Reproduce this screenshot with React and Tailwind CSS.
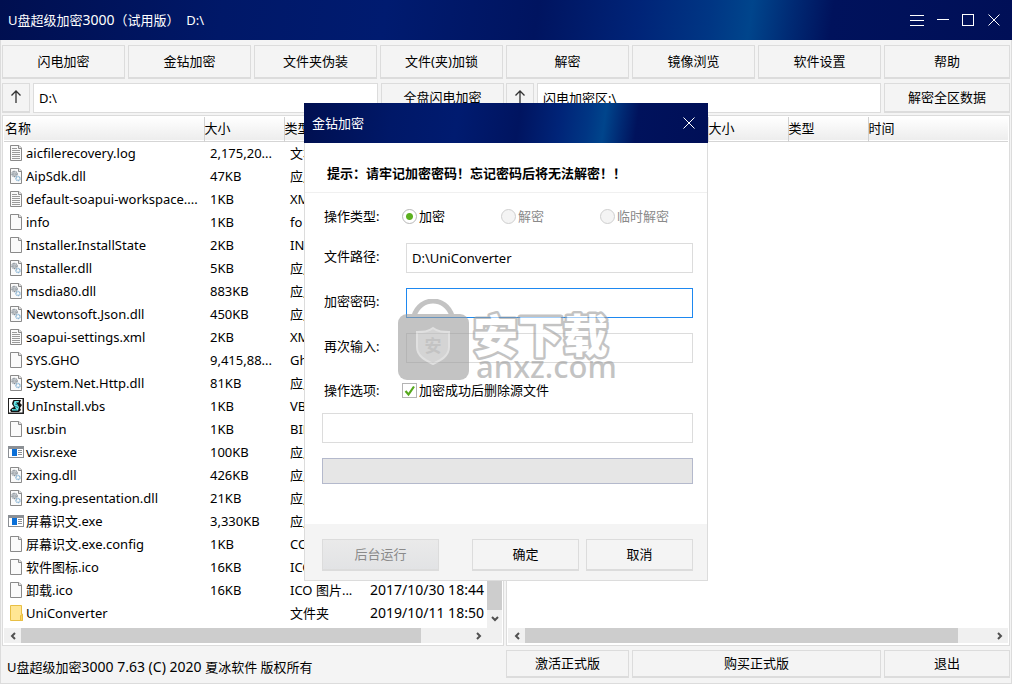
import { useState } from 'react';

const toolbar = ['闪电加密', '金钻加密', '文件夹伪装', '文件(夹)加锁', '解密', '镜像浏览', '软件设置', '帮助'];

const files = [
    { icon: 'text', name: 'aicfilerecovery.log', size: '2,175,20...', type: '文本文档' },
    { icon: 'dll', name: 'AipSdk.dll', size: '47KB', type: '应用程...' },
    { icon: 'text', name: 'default-soapui-workspace....', size: '1KB', type: 'XML 文档' },
    { icon: 'blank', name: 'info', size: '1KB', type: 'fo' },
    { icon: 'blank', name: 'Installer.InstallState', size: '2KB', type: 'INSTALL...' },
    { icon: 'dll', name: 'Installer.dll', size: '5KB', type: '应用程...' },
    { icon: 'dll', name: 'msdia80.dll', size: '883KB', type: '应用程...' },
    { icon: 'dll', name: 'Newtonsoft.Json.dll', size: '450KB', type: '应用程...' },
    { icon: 'text', name: 'soapui-settings.xml', size: '2KB', type: 'XML 文档' },
    { icon: 'blank', name: 'SYS.GHO', size: '9,415,88...', type: 'Gho' },
    { icon: 'dll', name: 'System.Net.Http.dll', size: '81KB', type: '应用程...' },
    { icon: 'vbs', name: 'UnInstall.vbs', size: '1KB', type: 'VBS' },
    { icon: 'blank', name: 'usr.bin', size: '1KB', type: 'BIN 文件' },
    { icon: 'exe', name: 'vxisr.exe', size: '100KB', type: '应用程序' },
    { icon: 'dll', name: 'zxing.dll', size: '426KB', type: '应用程...' },
    { icon: 'dll', name: 'zxing.presentation.dll', size: '21KB', type: '应用程...' },
    { icon: 'exe', name: '屏幕识文.exe', size: '3,330KB', type: '应用程序' },
    { icon: 'blank', name: '屏幕识文.exe.config', size: '1KB', type: 'CONFIG' },
    { icon: 'blank', name: '软件图标.ico', size: '16KB', type: 'ICO 图片...' },
    { icon: 'blank', name: '卸载.ico', size: '16KB', type: 'ICO 图片...', time: '2017/10/30 18:44' },
    { icon: 'folder', name: 'UniConverter', size: '', type: '文件夹', time: '2019/10/11 18:50' },
];

// shared by the window and the dialog title bars
const titleBg = 'bg-[linear-gradient(98deg,#000f50_0%,#001868_22%,#001b70_38%,#001460_53%,#002478_63%,#003684_70%,#00458c_74%,#002a74_78%,#00125c_82%,#000f57_100%)]';

function FileIcon({ kind }) {
    if (kind === 'exe') {
        return (
            <svg width="16" height="16" viewBox="0 0 16 16" shapeRendering="crispEdges" className="shrink-0">
                <path d="M0 2h16v12H0z" fill="#8b8f94" />
                <path d="M1 5h14v8H1z" fill="#fff" />
                <path d="M4 5h5v7H4z" fill="#0a6fd8" />
                <path d="M10 6h4v1h-4zM10 8h4v1h-4zM10 10h4v1h-4z" fill="#8b8f94" />
            </svg>
        );
    }
    if (kind === 'vbs') {
        return (
            <svg width="16" height="16" viewBox="0 0 16 16" className="shrink-0">
                <path d="M0 0h16v16H0z" fill="#222" />
                <path d="M1 1h13.500v13.500H1z" fill="#fff" />
                <path d="M4.500 4l1-2H13l-1 3 2 2-2 3 1 2-2 2H3l-1-2 2-2 2-1-2-3z" fill="#111" />
                <path d="M6.500 3H11l-.5 1.500H8L11 9l-1 3.500H4V11h4L5.500 6z" fill="#6fe6e8" />
                <path d="M7 6l3 1M7 8.500l3 1M5 12h4" stroke="#0d8d94" />
            </svg>
        );
    }
    if (kind === 'folder') {
        return (
            <svg width="16" height="16" viewBox="0 0 16 16" className="shrink-0">
                <path d="M2.500 .5h11v8.500h1v6.500h-12z" fill="#ffe694" stroke="#e8bf45" />
                <path d="M12.500 15.500v-5l2-1v6z" fill="#ffd65c" stroke="#e8bf45" />
            </svg>
        );
    }
    return (
        <svg width="16" height="16" viewBox="0 0 16 16" className="shrink-0">
            <path d="M2.500 .5h8.500l2.500 2.500v12.500h-11z" fill="#fafafa" stroke="#8a8a8a" />
            <path d="M10.500 .5v3h3" fill="#e4e4e4" stroke="#8a8a8a" />
            {kind === 'text' && <path d="M4 3.500h5M4 5.500h8M4 7.500h8M4 9.500h8M4 11.500h8M4 13.500h8" stroke="#9a9a9a" />}
            {kind === 'dll' && (
                <g fill="none">
                    <circle cx="6.500" cy="6" r="2.500" stroke="#868f97" strokeWidth="1.500" strokeDasharray="1.200 .4" />
                    <circle cx="6.500" cy="6" r="1" stroke="#8d969e" />
                    <circle cx="10" cy="10.500" r="2" stroke="#8db6d4" strokeWidth="1.500" strokeDasharray="1.200 .4" />
                </g>
            )}
        </svg>
    );
}

function Arrow({ className }) {
    return (
        <svg width="8" height="8" viewBox="0 0 8 8" className={className}>
            <path d="M2 1l3 3-3 3" fill="none" stroke="#505050" strokeWidth="2" />
        </svg>
    );
}

function CloseIcon() {
    return (
        <svg width="14" height="14" viewBox="0 0 14 14" stroke="#fff">
            <path d="M1.500 1.500l11 11M12.500 1.500l-11 11" />
        </svg>
    );
}

function HScroll({ thumb }) {
    return (
        <div className="flex h-[15px] shrink-0 bg-[#f0f0f0]">
            <button aria-label="向左" className="flex w-[17px] items-center justify-center"><Arrow className="rotate-180" /></button>
            <div className="flex-1"><div className={`h-full bg-[#cdcdcd] ${thumb}`} /></div>
            <button aria-label="向右" className="flex w-[17px] items-center justify-center"><Arrow /></button>
        </div>
    );
}

function Btn({ className = '', children, ...rest }) {
    return (
        <button className={`border border-[#dcdcdc] border-b-2 bg-[#f4f4f4] pb-px text-center ${className}`} {...rest}>
            {children}
        </button>
    );
}

function FileTable({ rows }) {
    return (
        <table className="w-full table-fixed border-collapse text-left">
            <colgroup>
                <col className="w-[200px]" />
                <col className="w-[80px]" />
                <col className="w-[80px]" />
                <col />
            </colgroup>
            <thead>
                <tr className="h-6 border-b border-[#d5d5d5] bg-linear-to-b from-white to-[#ededed]">
                    <th className="pb-[2px] pl-px font-normal">名称</th>
                    <th className="border-l border-[#d0d0d0] pb-[2px] font-normal">大小</th>
                    <th className="border-l border-[#d0d0d0] pb-[2px] font-normal">类型</th>
                    <th className="border-l border-[#d0d0d0] pb-[2px] font-normal">时间</th>
                </tr>
            </thead>
            <tbody>
                {rows.map((f) => (
                    <tr key={f.name} className="h-[23px]">
                        <td className="pl-1">
                            <div className="flex items-center gap-[2px] whitespace-nowrap">
                                <FileIcon kind={f.icon} />
                                {f.name}
                            </div>
                        </td>
                        <td className="truncate pl-[6px]">{f.size}</td>
                        <td className="truncate pl-[6px]">{f.type}</td>
                        <td className="whitespace-nowrap pl-[6px] text-[14px]">{f.time}</td>
                    </tr>
                ))}
            </tbody>
        </table>
    );
}

function PathBar({ id, value, action, actionWidth }) {
    return (
        <div className="flex h-[30px] min-w-0 gap-[3px]">
            <Btn className="flex w-7 items-center justify-center" aria-label="上一级">
                <svg width="12" height="14" viewBox="0 0 12 14" fill="none" stroke="#333" strokeWidth="1.300">
                    <path d="M6 13V1M1.500 5.500L6 1l4.500 4.500" />
                </svg>
            </Btn>
            <input
                id={id}
                aria-label="路径"
                defaultValue={value}
                className="min-w-0 flex-1 border border-[#dcdcdc] bg-white px-[5px] outline-none"
            />
            <Btn className={actionWidth}>{action}</Btn>
        </div>
    );
}

function Watermark() {
    return (
        <svg width="230" height="90" viewBox="0 0 230 90" className="pointer-events-none absolute top-[196px] left-[93px]">
            <g opacity=".6">
                <path d="M17 17C23-3 49-3 55 17" fill="none" stroke="#9c9c9c" strokeWidth="5" />
                <rect x="1" y="15" width="71" height="66" rx="9" fill="#9c9c9c" />
                <path d="M36 29c5 4 10 4 16 4v15c0 9-8 13-16 17-8-4-16-8-16-17V33c6 0 11 0 16-4z" fill="#b8b8b8" stroke="#cccccc" strokeWidth="2" />
                <text x="36" y="53" textAnchor="middle" fontSize="17" fontWeight="700" fill="#9c9c9c">安</text>
                <text
                    x="76"
                    y="54"
                    fontSize="45"
                    fontWeight="900"
                    fill="#fff"
                    stroke="#9c9c9c"
                    strokeWidth="5"
                    strokeLinejoin="round"
                    paintOrder="stroke"
                >
                    安下载
                </text>
                <text x="79" y="79" fontSize="31" fontWeight="500" fill="#9c9c9c">anxz.com</text>
            </g>
        </svg>
    );
}

function EncryptDialog() {
    const [mode, setMode] = useState('加密');
    const field = 'h-[30px] w-full border border-[#dcdcdc] bg-transparent px-[5px] outline-none';
    const radio = 'size-[15px] appearance-none rounded-full border border-[#b8b8b8] bg-[#f4f4f4] checked:bg-[radial-gradient(circle,#5cb020_0_3px,#fff_4px)] disabled:border-[#cfcfcf]';

    return (
        <div role="dialog" aria-label="金钻加密" className="relative w-[404px] bg-white">
            <div className={`flex h-10 items-center justify-between pr-3 pl-2 text-white ${titleBg}`}>
                <h2>金钻加密</h2>
                <button aria-label="关闭"><CloseIcon /></button>
            </div>
            <div className="border border-t-0 border-[#dcdcdc]">
                <p className="flex h-[50px] items-center border-b border-[#f0f0f0] px-[22px] pt-[10px] font-bold">
                    提示：请牢记加密密码！忘记密码后将无法解密！！
                </p>
                <form className="pr-[14px] pb-10 pl-[17px]">
                    <fieldset className="mb-1 flex h-[46px] items-center">
                        <legend className="sr-only">操作类型</legend>
                        <span className="w-[80px] pl-[2px]">操作类型:</span>
                        {['加密', '解密', '临时解密'].map((m) => (
                            <label key={m} className="flex w-[99px] items-center gap-[2px] has-disabled:text-[#8a8a8a]">
                                <input
                                    type="radio"
                                    name="mode"
                                    checked={mode === m}
                                    disabled={m !== '加密'}
                                    onChange={() => setMode(m)}
                                    className={radio}
                                />
                                {m}
                            </label>
                        ))}
                    </fieldset>
                    <div className="grid grid-cols-[84px_1fr] items-center gap-y-[15px]">
                        <label htmlFor="path" className="pb-1 pl-[2px]">文件路径:</label>
                        <input id="path" defaultValue="D:\UniConverter" className={field} />
                        <label htmlFor="pwd" className="pb-1 pl-[2px]">加密密码:</label>
                        <input id="pwd" type="password" className="h-[30px] w-full border border-[#1e88f0] px-[5px] outline-none" />
                        <label htmlFor="pwd2" className="pb-1 pl-[2px]">再次输入:</label>
                        <input id="pwd2" type="password" className={field} />
                    </div>
                    <div className="mt-1 flex h-[46px] items-center">
                        <span className="w-[80px] pl-[2px]">操作选项:</span>
                        <label className="flex items-center gap-[2px]">
                            <span className="grid size-[15px]">
                                <input type="checkbox" defaultChecked className="peer col-start-1 row-start-1 size-[15px] appearance-none border border-[#b4b4b4] bg-white" />
                                <svg viewBox="0 0 15 15" className="invisible col-start-1 row-start-1 size-[15px] peer-checked:visible">
                                    <path d="M3.500 8l3 3.500 5.500-8" fill="none" stroke="#55a81c" strokeWidth="2.200" />
                                </svg>
                            </span>
                            加密成功后删除源文件
                        </label>
                    </div>
                    <input aria-label="状态" readOnly className={field} />
                    <div role="progressbar" className="mt-[15px] h-[26px] border border-[#b4b9cc] bg-[#e6e6e6]" />
                </form>
                <div className="flex h-14 items-center bg-[#f4f4f4] pt-[5px] pr-[14px] pl-[17px]">
                    <Btn disabled className="mr-auto h-8 w-[117px] bg-linear-to-b from-[#eaeaea] to-[#e2e3e5] text-[#8a8a8a]">后台运行</Btn>
                    <Btn className="h-8 w-[107px]">确定</Btn>
                    <Btn className="ml-[7px] h-8 w-[107px]">取消</Btn>
                </div>
            </div>
            <Watermark />
        </div>
    );
}

export default function App() {
    return (
        <div className="flex h-screen flex-col overflow-hidden bg-[#f4f4f4] font-['Noto_Sans','Noto_Sans_CJK_SC',sans-serif] text-[13px] leading-5 text-black">
            <header className={`flex h-10 shrink-0 items-center justify-between pr-[11px] pl-2 text-white ${titleBg}`}>
                <h1 className="whitespace-pre">U盘超级加密<span className="text-[14px]">3000</span>（试用版）  D:\</h1>
                <div className="flex items-center gap-[13px]">
                    <button aria-label="菜单">
                        <svg width="14" height="14" viewBox="0 0 14 14" stroke="#fff" shapeRendering="crispEdges"><path d="M0 2.500h14M0 7.500h14M0 12.500h14" /></svg>
                    </button>
                    <button aria-label="最小化">
                        <svg width="12" height="14" viewBox="0 0 12 14" stroke="#fff" shapeRendering="crispEdges"><path d="M0 6.500h12" /></svg>
                    </button>
                    <button aria-label="最大化">
                        <svg width="12" height="14" viewBox="0 0 12 14" fill="none" stroke="#fff" shapeRendering="crispEdges"><path d="M.5 1.500h11v11H.5z" /></svg>
                    </button>
                    <button aria-label="关闭"><CloseIcon /></button>
                </div>
            </header>

            <main className="flex min-h-0 flex-1 flex-col border border-t-0 border-[#dcdcdc] px-px">
                <nav className="mt-[5px] grid grid-cols-[repeat(7,1fr)_126px] gap-[3px]">
                    {toolbar.map((t) => (
                        <Btn key={t} className="h-[34px]">{t}</Btn>
                    ))}
                </nav>

                <div className="mt-1 grid grid-cols-[502fr_504fr] gap-[2px]">
                    <PathBar id="src" value="D:\" action="全盘闪电加密" actionWidth="w-[123px]" />
                    <PathBar id="dst" value="闪电加密区:\" action="解密全区数据" actionWidth="w-[126px]" />
                </div>

                <div className="mt-[2px] grid min-h-0 flex-1 grid-cols-[502fr_504fr] gap-[2px]">
                    <section className="flex min-w-0 flex-col border border-[#dcdcdc] bg-white p-px pb-[2px]">
                        <div className="flex min-h-0 flex-1">
                            <div className="min-w-0 flex-1 overflow-hidden">
                                <FileTable rows={files} />
                            </div>
                            <div className="flex w-[15px] flex-col bg-[#f0f0f0]">
                                <div className="mt-[17px] flex-1 bg-[#cdcdcd]" />
                                <button aria-label="向下" className="flex h-[18px] items-center justify-center"><Arrow className="rotate-90" /></button>
                            </div>
                        </div>
                        <div className="flex">
                            <div className="flex-1"><HScroll thumb="w-[89%]" /></div>
                            <div className="w-[15px] bg-[#f0f0f0]" />
                        </div>
                    </section>
                    <section className="flex min-w-0 flex-col border border-[#dcdcdc] bg-white p-px pb-[2px]">
                        <div className="min-h-0 flex-1">
                            <FileTable rows={[]} />
                        </div>
                        <HScroll thumb="w-[93%]" />
                    </section>
                </div>

                <footer className="mt-1 mb-[5px] grid h-7 grid-cols-[repeat(7,1fr)_126px] gap-[3px]">
                    <p className="col-span-4 self-center pt-[6px] pl-[5px]">
                        U盘超级加密<span className="text-[14px]">3000 7.63 (C) 2020 </span>夏冰软件 版权所有
                    </p>
                    <Btn>激活正式版</Btn>
                    <Btn className="col-span-2">购买正式版</Btn>
                    <Btn>退出</Btn>
                </footer>
            </main>

            <div className="fixed inset-0 flex items-center justify-center">
                <EncryptDialog />
            </div>
        </div>
    );
}
